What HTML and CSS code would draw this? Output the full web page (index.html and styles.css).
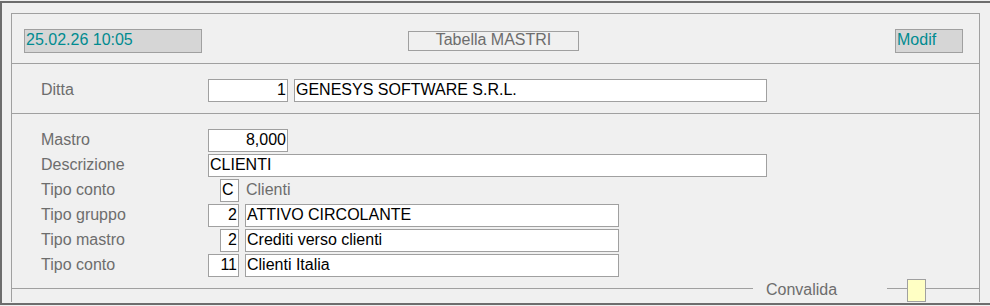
FILE: index.html
```html
<!DOCTYPE html>
<html lang="it">

<head>
  <meta charset="utf-8">
  <title>Tabella MASTRI</title>
  <link rel="stylesheet" href="styles.css">
</head>

<body>
  <div class="window">
    <div class="frame">
      <div class="head">
        <div class="stamp">25.02.26 10:05</div>
        <div class="title">Tabella MASTRI</div>
        <div class="stamp mode">Modif</div>
      </div>

      <div class="company">
        <div class="row">
          <span class="label">Ditta</span>
          <span class="field num w-code">1</span>
          <span class="field w-name">GENESYS SOFTWARE S.R.L.</span>
        </div>
      </div>

      <div class="detail">
        <div class="row">
          <span class="label">Mastro</span>
          <span class="field num w-code">8,000</span>
        </div>
        <div class="row">
          <span class="label">Descrizione</span>
          <span class="field w-desc">CLIENTI</span>
        </div>
        <div class="row">
          <span class="label">Tipo conto</span>
          <span class="code"><span class="field w-tiny">C</span></span>
          <span class="label note">Clienti</span>
        </div>
        <div class="row">
          <span class="label">Tipo gruppo</span>
          <span class="code"><span class="field num w-small">2</span></span>
          <span class="field w-text">ATTIVO CIRCOLANTE</span>
        </div>
        <div class="row">
          <span class="label">Tipo mastro</span>
          <span class="code"><span class="field num w-tiny">2</span></span>
          <span class="field w-text">Crediti verso clienti</span>
        </div>
        <div class="row">
          <span class="label">Tipo conto</span>
          <span class="code"><span class="field num w-small">11</span></span>
          <span class="field w-text">Clienti Italia</span>
        </div>
      </div>

      <div class="foot">
        <span class="rule grow"></span>
        <span class="label legend">Convalida</span>
        <span class="rule short"></span>
        <span class="check"></span>
        <span class="rule tail"></span>
      </div>
    </div>
  </div>
</body>

</html>
```

FILE: styles.css
```css
* {
  box-sizing: border-box;
}

html {
  background-color: #f0f0f0;
}

body {
  margin: 0;
  font-family: "Liberation Sans", Arial, sans-serif;
  font-size: 16px;
  color: #000000;
}

.window {
  margin-top: 1px;
  height: 304px;
  border-top: 2px solid #6d6d6d;
  border-left: 2px solid #6d6d6d;
  border-bottom: 2px solid #6d6d6d;
  padding-top: 10px;
}

.frame {
  margin-left: 9px;
  width: 969px;
  border-top: 1px solid #a0a0a0;
  border-left: 1px solid #a0a0a0;
  border-right: 1px solid #a0a0a0;
}

/* header strip */
.head {
  display: flex;
  align-items: flex-start;
  height: 50px;
  padding: 15px 16px 0 12px;
  border-bottom: 1px solid #a0a0a0;
}

.stamp {
  width: 178px;
  height: 24px;
  padding-left: 1px;
  border: 1px solid #a0a0a0;
  background-color: #d6d6d6;
  color: #008b90;
  line-height: 19px;
}

.title {
  width: 171px;
  height: 20px;
  margin-top: 2px;
  margin-left: 206px;
  border: 1px solid #a0a0a0;
  color: #6d6d6d;
  text-align: center;
  line-height: 15px;
}

.mode {
  width: 68px;
  margin-left: auto;
}

/* form rows */
.company {
  height: 50px;
  padding: 15px 0 0 29px;
  border-bottom: 1px solid #a0a0a0;
}

.detail {
  padding: 15px 0 0 29px;
}

.row {
  display: flex;
  height: 23px;
  margin-bottom: 2px;
}

.company .row {
  margin-bottom: 0;
}

.label {
  width: 167px;
  height: 23px;
  padding-top: 1px;
  color: #6d6d6d;
  line-height: 19px;
  white-space: nowrap;
}

.label.note {
  width: auto;
  margin-left: 7px;
}

.field {
  height: 23px;
  padding: 0 1px;
  border: 1px solid #a0a0a0;
  background-color: #ffffff;
  line-height: 19px;
  white-space: nowrap;
  overflow: hidden;
}

.field + .field,
.code + .field {
  margin-left: 6px;
}

.num {
  text-align: right;
}

.code {
  display: flex;
  justify-content: flex-end;
  width: 31px;
}

.w-code {
  width: 80px;
}

.w-name {
  width: 473px;
}

.w-desc {
  width: 559px;
}

.w-tiny {
  width: 19px;
}

.w-small {
  width: 31px;
}

.w-text {
  width: 374px;
}

/* bottom edge with legend */
.foot {
  display: flex;
  align-items: flex-start;
  height: 23px;
  margin-bottom: -13px;
}

.rule {
  height: 1px;
  margin-top: 9px;
  background-color: #a0a0a0;
}

.rule.grow {
  flex: 1;
}

.rule.short {
  width: 20px;
}

.rule.tail {
  width: 53px;
}

.legend {
  width: 134px;
  padding-left: 13px;
}

.check {
  width: 19px;
  height: 23px;
  border: 1px solid #a0a0a0;
  background-color: #ffffc4;
}
```
